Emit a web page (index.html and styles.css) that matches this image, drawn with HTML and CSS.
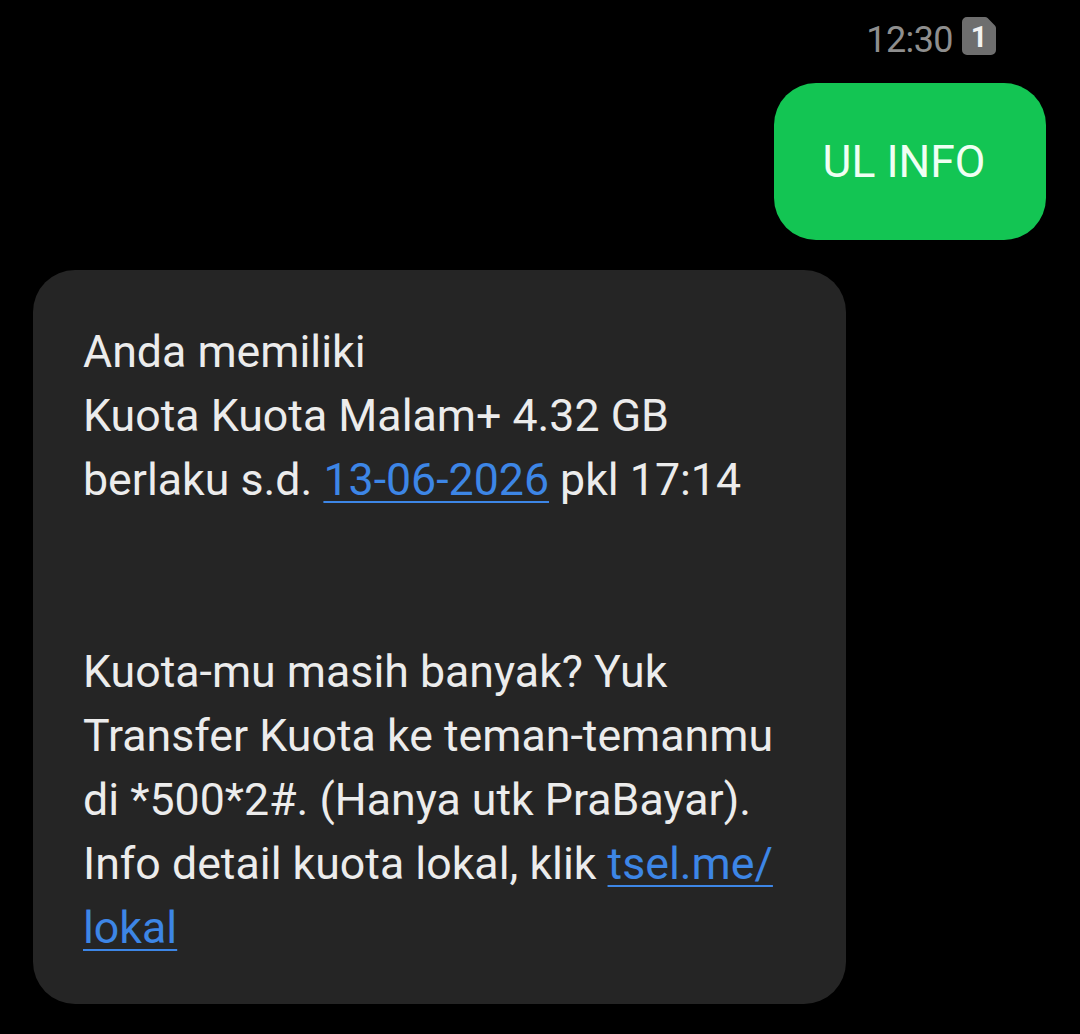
FILE: index.html
```html
<!DOCTYPE html>
<html>
<head>
<meta charset="utf-8">
<link rel="stylesheet" href="styles.css">
</head>
<body>
<div class="screen">
  <div class="meta">
    <span class="time">12:30</span>
    <span class="sim">
      <svg class="sim-shape" width="34" height="38" viewBox="0 0 34 38"><path d="M5 0H23Q24.5 0 25.6 1.1L32.9 8.4Q34 9.5 34 11V33A5 5 0 0 1 29 38H5A5 5 0 0 1 0 33V5A5 5 0 0 1 5 0Z" fill="#6e6e6e"/></svg>
      <span class="sim-num">1</span>
    </span>
  </div>
  <div class="row-out">
    <div class="bubble-out">UL INFO</div>
  </div>
  <div class="row-in">
    <div class="bubble-in">Anda memiliki<br>Kuota Kuota Malam+ 4.32 GB<br>berlaku s.d. <a class="link" href="#">13-06-2026</a> pkl 17:14<br><br><br>Kuota-mu masih banyak? Yuk<br>Transfer Kuota ke teman-temanmu<br>di *500*2#. (Hanya utk PraBayar).<br>Info detail kuota lokal, klik <a class="link" href="#">tsel.me/<br>lokal</a></div>
  </div>
</div>
</body>
</html>
```

FILE: styles.css
```css
html, body {
  margin: 0;
  padding: 0;
  background: #000;
}
body {
  font-family: Roboto, "Noto Sans", sans-serif;
  width: 1080px;
  height: 1034px;
  overflow: hidden;
}
.screen {
  display: flex;
  flex-direction: column;
}
.meta {
  display: flex;
  justify-content: flex-end;
  align-items: flex-start;
  gap: 9px;
  padding: 17px 84px 0 0;
  height: 41px;
}
.time {
  color: #8e8e8e;
  font-size: 36px;
  line-height: 36px;
  margin-top: 5px;
  letter-spacing: -0.6px;
}
.sim {
  position: relative;
  width: 34px;
  height: 38px;
  display: block;
}
.sim-shape {
  display: block;
}
.sim-num {
  position: absolute;
  left: 0;
  top: 1px;
  width: 34px;
  height: 38px;
  display: flex;
  align-items: center;
  justify-content: center;
  color: #f2f2f2;
  font-weight: bold;
  font-size: 29px;
}
.row-out {
  display: flex;
  justify-content: flex-end;
  padding: 25px 34px 0 0;
}
.bubble-out {
  background: #13c553;
  color: #effff3;
  border-radius: 42px;
  height: 157px;
  width: 272px;
  box-sizing: border-box;
  padding-right: 12px;
  display: flex;
  align-items: center;
  justify-content: center;
  font-size: 44.5px;
}
.row-in {
  display: flex;
  padding: 30px 0 0 33px;
}
.bubble-in {
  background: #252525;
  color: #ececec;
  border-radius: 42px;
  width: 813px;
  box-sizing: border-box;
  padding: 50px 40px 44px 50px;
  font-size: 44.7px;
  line-height: 64px;
}
.link {
  color: #3d86e6;
  text-decoration: underline;
  text-decoration-thickness: 2px;
  text-underline-offset: 6px;
}
```
